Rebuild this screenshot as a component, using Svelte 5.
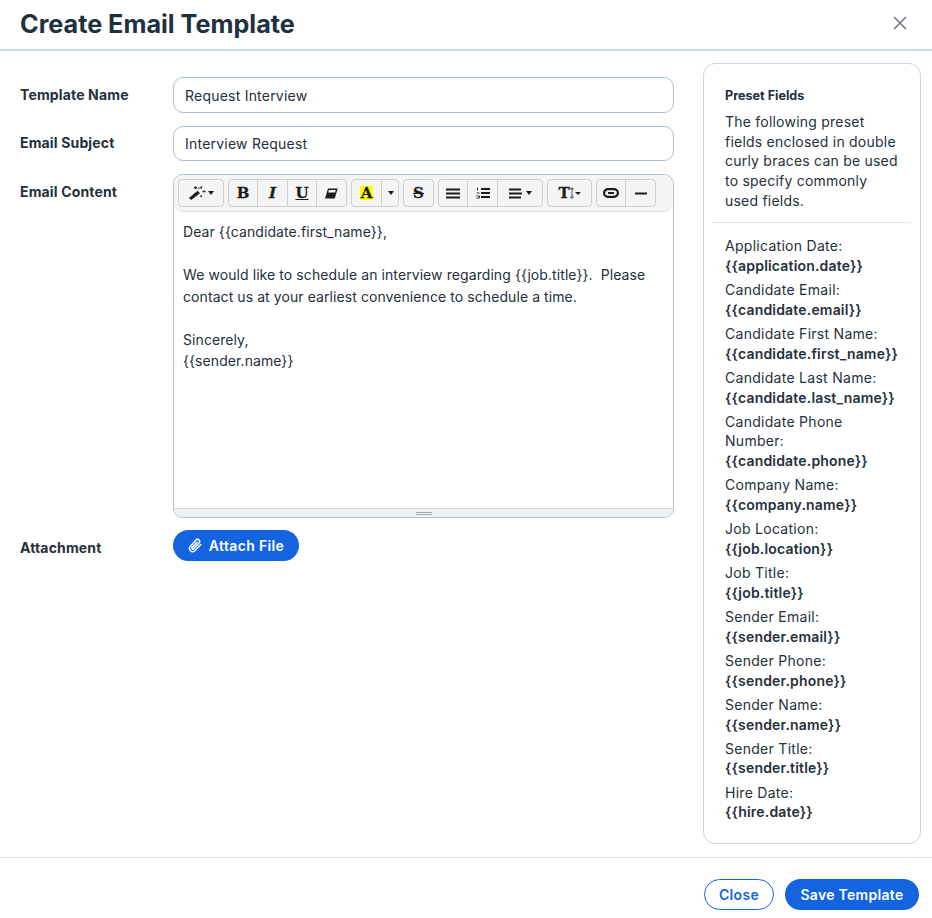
<script>
  const fields = [
    ['Application Date:', '{{application.date}}'],
    ['Candidate Email:', '{{candidate.email}}'],
    ['Candidate First Name:', '{{candidate.first_name}}'],
    ['Candidate Last Name:', '{{candidate.last_name}}'],
    ['Candidate Phone Number:', '{{candidate.phone}}'],
    ['Company Name:', '{{company.name}}'],
    ['Job Location:', '{{job.location}}'],
    ['Job Title:', '{{job.title}}'],
    ['Sender Email:', '{{sender.email}}'],
    ['Sender Phone:', '{{sender.phone}}'],
    ['Sender Name:', '{{sender.name}}'],
    ['Sender Title:', '{{sender.title}}'],
    ['Hire Date:', '{{hire.date}}']
  ];
</script>

<div class="modal">
  <header class="head">
    <h1>Create Email Template</h1>
    <button class="x" aria-label="Close">
      <svg width="14" height="14" viewBox="0 0 14 14"><path d="M1 1L13 13M13 1L1 13" stroke="#6b7580" stroke-width="1.5" fill="none"/></svg>
    </button>
  </header>

  <div class="body">
    <div class="form">
      <div class="row">
        <span class="label">Template Name</span>
        <input class="field" value="Request Interview" />
      </div>
      <div class="row subject">
        <span class="label">Email Subject</span>
        <input class="field" value="Interview Request" />
      </div>
      <div class="row content">
        <span class="label">Email Content</span>
        <div class="editor">
          <div class="toolbar">
            <div class="grp">
              <span class="b w46">
                <svg width="17" height="14" viewBox="0 0 17 14"><path d="M0 12L8.500 4.800L11 7.200L2.200 14Z" fill="#1d1d1d"/><path d="M6.500 0.500v2.500M5 1.700h3M13 0.500l-1.600 2M13.500 5.500h3M11.500 9.500l1.200 1.500M9.500 1.500l.8 1.200" stroke="#1d1d1d" stroke-width="1.300" fill="none"/></svg>
                <i class="caret"></i>
              </span>
            </div>
            <div class="grp">
              <span class="b w30 glyph">B</span>
              <span class="b w30 glyph it">I</span>
              <span class="b w29 glyph un">U</span>
              <span class="b w30">
                <svg width="13" height="11" viewBox="0 0 13 11"><path d="M3 .5H12.700L9.700 10.500H0Z" fill="#1d1d1d"/><path d="M4 2H10.800L10.100 4.600H3.100Z" fill="#f5f5f5"/></svg>
              </span>
            </div>
            <div class="grp">
              <span class="b w31"><span class="hl glyph">A</span></span>
              <span class="b w17"><i class="caret"></i></span>
            </div>
            <div class="grp">
              <span class="b w31 glyph st">S</span>
            </div>
            <div class="grp">
              <span class="b w30">
                <svg width="14" height="11" viewBox="0 0 14 11"><path d="M0 1.500h14M0 5.500h14M0 9.500h14" stroke="#1d1d1d" stroke-width="2"/></svg>
              </span>
              <span class="b w30">
                <svg width="14" height="12" viewBox="0 0 14 12"><path d="M5 2h9M5 6h9M5 10h9" stroke="#1d1d1d" stroke-width="2"/><path d="M1.500 .5v3M.5 6h3M.5 9h3v2h-3" stroke="#333" stroke-width="1" fill="none"/></svg>
              </span>
              <span class="b w44">
                <svg width="14" height="11" viewBox="0 0 14 11"><path d="M0 1.500h12M0 5.500h13M0 9.500h12" stroke="#1d1d1d" stroke-width="2"/></svg>
                <i class="caret wide"></i>
              </span>
            </div>
            <div class="grp">
              <span class="b w45">
                <span class="glyph tt">T</span>
                <svg class="ibeam" width="4" height="12" viewBox="0 0 4 12"><path d="M2 0v12M0 1.500l2 1 2-1M0 10.500l2-1 2 1" stroke="#444" stroke-width=".9" fill="none"/></svg>
                <i class="caret small"></i>
              </span>
            </div>
            <div class="grp">
              <span class="b w30">
                <svg width="16" height="10" viewBox="0 0 16 10"><rect x="1.100" y="1.100" width="13.800" height="7.800" rx="3.900" fill="none" stroke="#1d1d1d" stroke-width="2.200"/><path d="M5 5h6" stroke="#1d1d1d" stroke-width="2"/></svg>
              </span>
              <span class="b w30">
                <svg width="12" height="3" viewBox="0 0 12 3"><path d="M0 1.500h12" stroke="#1d1d1d" stroke-width="2"/></svg>
              </span>
            </div>
          </div>
          <div class="text">
            <p>Dear {'{{candidate.first_name}}'},</p>
            <p class="blank">&nbsp;</p>
            <p>We would like to schedule an interview regarding {'{{job.title}}'}.&nbsp; Please contact us at your earliest convenience to schedule a time.</p>
            <p class="blank">&nbsp;</p>
            <p>Sincerely,</p>
            <p>{'{{sender.name}}'}</p>
          </div>
          <div class="resizer"><i></i></div>
        </div>
      </div>
      <div class="row attach">
        <span class="label">Attachment</span>
        <button class="btn primary af">
          <svg width="14" height="15" viewBox="0 0 14 15"><path d="M12.800 6.500L7 12.500a3.100 3.100 0 0 1-4.800-4L8 2a2.100 2.100 0 0 1 3.200 2.800L5.700 10.800a1 1 0 0 1-1.500-1.400L9 4.300" fill="none" stroke="#eef4ff" stroke-width="1.600" stroke-linecap="round"/></svg>
          Attach File
        </button>
      </div>
    </div>

    <aside class="panel">
      <h2>Preset Fields</h2>
      <p class="intro">The following preset fields enclosed in double curly braces can be used to specify commonly used fields.</p>
      <hr />
      <ul>
        {#each fields as [name, val]}
          <li>{name}<strong>{val}</strong></li>
        {/each}
      </ul>
    </aside>
  </div>

  <footer class="foot">
    <button class="btn outline">Close</button>
    <button class="btn primary">Save Template</button>
  </footer>
</div>

<style>
  :global(body) { margin: 0; background: #fff; }
  * { box-sizing: border-box; }
  .modal {
    width: 932px; height: 918px; display: flex; flex-direction: column;
    font-family: Inter, "Liberation Sans", sans-serif; color: #25303b; overflow: hidden;
  }
  .head {
    height: 51px; flex: none; display: flex; align-items: center; justify-content: space-between;
    padding: 0 25px 3px 20px; border-bottom: 2px solid #cfdbe3;
  }
  h1 { margin: 0; font-size: 25.200px; font-weight: 700; color: #20303e; line-height: 30px; position: relative; top: 1px; }
  .x { border: 0; background: none; padding: 0; display: flex; }
  .body { flex: 1; display: flex; padding: 12px 11px 0 20px; min-height: 0; gap: 29px; }
  .form { width: 654px; flex: none; padding-top: 14px; }
  .row { display: flex; align-items: flex-start; }
  .label { width: 153px; flex: none; font-size: 14px; font-weight: 700; color: #25303b; line-height: 20px; padding-top: 8px; letter-spacing: .15px; }
  .subject .label { padding-top: 7px; }
  .field {
    width: 501px; height: 36px; border: 1px solid #a9c1d3; border-radius: 10px; padding: 0 11px;
    font: 14px Inter, sans-serif; letter-spacing: .22px; color: #25303b; background: #fff; margin-bottom: 13px; outline: 0;
  }
  .subject .field { height: 35px; }
  .editor { width: 501px; height: 344px; border: 1px solid #a9c1d3; border-radius: 10px; display: flex; flex-direction: column; overflow: hidden; }
  .toolbar { height: 37px; flex: none; background: #f5f5f5; border-bottom: 1px solid #ddd; border-radius: 0 0 10px 10px; display: flex; gap: 4px; padding: 4px 0 0 4px; }
  .grp { display: flex; height: 28px; }
  .b {
    display: flex; align-items: center; justify-content: center; height: 28px;
    border: 1px solid #cfcfcf; margin-left: -1px; background: #f5f5f5; color: #1d1d1d;
  }
  .grp .b:first-child { margin-left: 0; border-radius: 4px 0 0 4px; }
  .grp .b:last-child { border-radius: 0 4px 4px 0; }
  .grp .b:only-child { border-radius: 4px; }
  .w46 { width: 46px; } .w30 { width: 31px; } .w29 { width: 30px; } .w31 { width: 31px; }
  .w17 { width: 18px; } .w44 { width: 46px; } .w45 { width: 45px; }
  .grp .b:first-child.w30 { width: 30px; }
  .glyph { font-family: "DejaVu Serif", serif; font-weight: 700; font-size: 15px; line-height: 15px; color: #1d1d1d; -webkit-text-stroke: .3px #1d1d1d; }
  .it { font-style: italic; }
  .un { text-decoration: underline; text-underline-offset: 1px; }
  .st { text-decoration: line-through; }
  .hl { background: #ff0; width: 13px; height: 14px; display: block; text-align: center; font-size: 15px; line-height: 14px; }
  .caret { display: inline-block; width: 0; height: 0; border: 3.500px solid transparent; border-top: 4px solid #1d1d1d; border-bottom: 0; margin-left: 2px; }
  .caret.wide { margin-left: 3px; }
  .caret.small { border-width: 3px; border-top-width: 3.500px; border-bottom-width: 0; border-top-color: #1d1d1d; margin-left: 1px; }
  .text { flex: 1; padding: 9px 9px 0; font-size: 14px; line-height: 21.500px; letter-spacing: .08px; color: #25303b; }
  .text p { margin: 0; }
  .resizer { height: 9px; flex: none; background: #f0f0f0; border-top: 1px solid #c9d6df; display: flex; justify-content: center; align-items: center; }
  .resizer i { display: block; width: 16px; height: 3px; border-top: 1px solid #aaa; border-bottom: 1px solid #aaa; }
  .attach { margin-top: 12px; }
  .btn {
    height: 31px; border-radius: 16px; font: 600 14px Inter, sans-serif; letter-spacing: .3px; padding: 0; display: inline-flex; align-items: center; justify-content: center;
  }
  .primary { background: #1464e0; color: #fff; border: 0; }
  .outline { background: #fff; color: #1464e0; border: 1px solid #1464e0; }
  .af { width: 126px; gap: 7px; letter-spacing: .35px; }
  .panel { width: 218px; height: 781px; flex: none; border: 1px solid #c6d6e2; border-radius: 12px; padding: 22px 9px 0 8px; font-size: 14px; line-height: 19.600px; letter-spacing: .28px; color: #25303b; }
  h2 { margin: 0 0 6.200px; padding-left: 13px; font-size: 12.600px; font-weight: 700; line-height: 20px; letter-spacing: 0; }
  .intro { margin: 0; padding: 0 10px 0 13px; letter-spacing: .22px; }
  hr { border: 0; border-top: 1px solid #e4e8eb; margin: 11.800px 0 13.300px; }
  ul { list-style: none; margin: 0; padding: 0 8px 0 13px; }
  li { margin-bottom: 4.720px; }
  li strong { display: block; font-weight: 600; letter-spacing: .18px; }
  .foot { height: 61px; flex: none; border-top: 1px solid #dfe3e6; display: flex; justify-content: flex-end; align-items: flex-start; gap: 11px; padding: 21px 13px 0 0; }
  .foot .outline { width: 70px; }
  .foot .primary { width: 134px; }
</style>
